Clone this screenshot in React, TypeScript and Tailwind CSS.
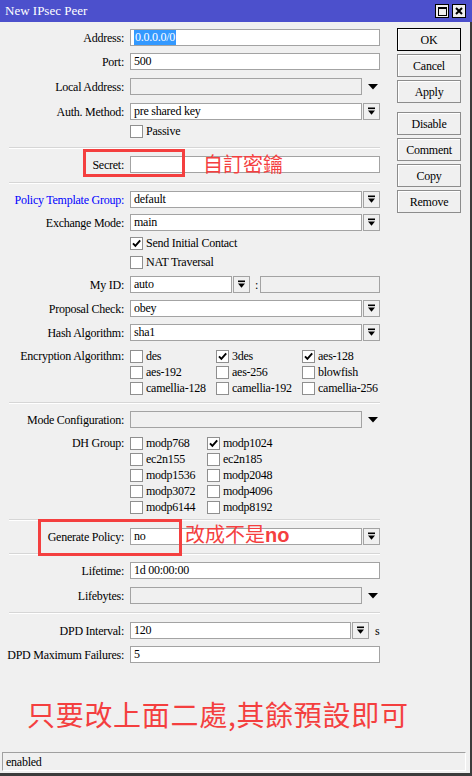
import React from 'react';

// IPsec peer editor window (WinBox style)

const DropBtn = () => (
  <div className="ml-px flex h-[17px] w-[17px] shrink-0 items-center justify-center border border-[#a3a3a3] bg-[#f0f0f0]">
    <svg width="9" height="9" viewBox="0 0 9 9">
      <rect x="1" y="0.5" width="7" height="1.6" fill="#000" />
      <path d="M1 3.4h7L4.5 7.8z" fill="#000" />
    </svg>
  </div>
);

const Arrow = () => (
  <svg className="ml-[6px] shrink-0" width="10" height="6" viewBox="0 0 10 6">
    <path d="M0 0h10L5 5.5z" fill="#000" />
  </svg>
);

function Label({ children, blue }: { children: React.ReactNode; blue?: boolean }) {
  return (
    <div className={`w-[124px] shrink-0 whitespace-nowrap text-right ${blue ? 'text-[#0000ff]' : 'text-black'}`}>
      {children}
    </div>
  );
}

function Box({ value, className, off }: { value?: React.ReactNode; className: string; off?: boolean }) {
  return (
    <div
      className={`flex h-[17px] items-center border border-[#a3a3a3] pl-[3px] leading-[15px] ${off ? 'bg-[#f0f0f0]' : 'bg-white'} ${className}`}
    >
      {value}
    </div>
  );
}

function Check({ on, label }: { on?: boolean; label: string }) {
  return (
    <div className="flex h-[16px] items-center whitespace-nowrap">
      <span className="flex h-[13px] w-[13px] shrink-0 items-center justify-center border border-[#8f8f8f] bg-white">
        {on && (
          <svg width="9" height="9" viewBox="0 0 9 9">
            <path d="M1 4.3l2.4 2.6L8.2 1.4" stroke="#000" strokeWidth="1.9" fill="none" />
          </svg>
        )}
      </span>
      <span className="ml-[3px]">{label}</span>
    </div>
  );
}

const Sep = ({ className }: { className: string }) => (
  <div className={`ml-[9px] h-[2px] w-[371px] border-t border-b border-t-[#d6d6d6] border-b-white ${className}`} />
);

function Btn({ children, primary, className = '' }: { children: string; primary?: boolean; className?: string }) {
  return (
    <div
      className={`flex h-[23px] w-[64px] items-center justify-center border bg-[#f0f0f0] shadow-[inset_1px_1px_0_#fff] ${primary ? 'border-black' : 'border-[#8c8c8c]'} ${className}`}
    >
      {children}
    </div>
  );
}

export default function App() {
  const encryption = [
    ['des', false], ['3des', true], ['aes-128', true],
    ['aes-192', false], ['aes-256', false], ['blowfish', false],
    ['camellia-128', false], ['camellia-192', false], ['camellia-256', false],
  ] as const;
  const dh = [
    ['modp768', false], ['modp1024', true],
    ['ec2n155', false], ['ec2n185', false],
    ['modp1536', false], ['modp2048', false],
    ['modp3072', false], ['modp4096', false],
    ['modp6144', false], ['modp8192', false],
  ] as const;

  return (
    <div className="flex h-[776px] w-[472px] flex-col overflow-hidden font-['Liberation_Serif',serif] text-[12px] tracking-[-0.25px] text-black">
      {/* title bar */}
      <div className="flex h-[22px] shrink-0 items-center bg-[#4c50cc] pl-[5px] pr-[6px]">
        <span className="text-[13px] tracking-normal text-white">New IPsec Peer</span>
        <div className="ml-auto flex gap-[3px]">
          <div className="flex h-[14px] w-[14px] items-center justify-center border border-black bg-[#eeeeee]">
            <div className="h-[9px] w-[9px] border border-t-2 border-black" />
          </div>
          <div className="flex h-[14px] w-[14px] items-center justify-center border border-black bg-[#eeeeee]">
            <svg width="8" height="8" viewBox="0 0 8 8">
              <path d="M1 1l6 6M7 1L1 7" stroke="#000" strokeWidth="2" />
            </svg>
          </div>
        </div>
      </div>

      <div className="flex flex-1 flex-col border-r-2 border-b-[3px] border-[#3c3c3c] bg-[#f0f0f0]">
        <div className="flex flex-1 overflow-hidden">
          {/* form */}
          <div className="relative flex w-[397px] shrink-0 flex-col">
            <div className="mt-[7px] flex h-[17px] items-center">
              <Label>Address:</Label>
              <Box
                className="ml-[6px] w-[250px]"
                value={<span className="bg-[#3399ff] px-px text-white">0.0.0.0/0</span>}
              />
            </div>
            <div className="mt-[7px] flex h-[17px] items-center">
              <Label>Port:</Label>
              <Box className="ml-[6px] w-[250px]" value="500" />
            </div>
            <div className="mt-[8px] flex h-[17px] items-center">
              <Label>Local Address:</Label>
              <Box className="ml-[6px] w-[232px]" off />
              <Arrow />
            </div>
            <div className="mt-[8px] flex h-[17px] items-center">
              <Label>Auth. Method:</Label>
              <Box className="ml-[6px] w-[232px]" value="pre shared key" />
              <DropBtn />
            </div>
            <div className="mt-[3px] ml-[130px]">
              <Check label="Passive" />
            </div>
            <Sep className="mt-[8px]" />

            <div className="relative mt-[7px] flex h-[17px] items-center">
              <Label>Secret:</Label>
              <Box className="ml-[6px] w-[250px]" />
              <div className="absolute left-[83px] top-[-7px] h-[28px] w-[102px] border-[3px] border-[#f43f3f]" />
              <span className="absolute left-[203px] top-[-6px] font-['Noto_Sans_CJK_TC',sans-serif] text-[20px] leading-[28px] tracking-normal text-[#f43f3f]">
                自訂密鑰
              </span>
            </div>
            <Sep className="mt-[9px]" />

            <div className="mt-[7px] flex h-[17px] items-center">
              <Label blue>Policy Template Group:</Label>
              <Box className="ml-[6px] w-[232px]" value="default" />
              <DropBtn />
            </div>
            <div className="mt-[6px] flex h-[17px] items-center">
              <Label>Exchange Mode:</Label>
              <Box className="ml-[6px] w-[232px]" value="main" />
              <DropBtn />
            </div>
            <div className="mt-[4px] ml-[130px]">
              <Check on label="Send Initial Contact" />
            </div>
            <div className="mt-[3px] ml-[130px]">
              <Check label="NAT Traversal" />
            </div>
            <div className="mt-[6px] flex h-[17px] items-center">
              <Label>My ID:</Label>
              <Box className="ml-[6px] w-[102px]" value="auto" />
              <DropBtn />
              <span className="ml-[5px] w-[5px]">:</span>
              <Box className="w-[120px]" off />
            </div>
            <div className="mt-[7px] flex h-[17px] items-center">
              <Label>Proposal Check:</Label>
              <Box className="ml-[6px] w-[232px]" value="obey" />
              <DropBtn />
            </div>
            <div className="mt-[7px] flex h-[17px] items-center">
              <Label>Hash Algorithm:</Label>
              <Box className="ml-[6px] w-[232px]" value="sha1" />
              <DropBtn />
            </div>
            <div className="mt-[7px] flex">
              <div className="flex h-[16px] items-center">
                <Label>Encryption Algorithm:</Label>
              </div>
              <div className="ml-[6px] grid grid-cols-[86px_86px_86px]">
                {encryption.map(([name, on]) => (
                  <Check key={name} on={on} label={name} />
                ))}
              </div>
            </div>
            <Sep className="mt-[6px]" />

            <div className="mt-[7px] flex h-[17px] items-center">
              <Label>Mode Configuration:</Label>
              <Box className="ml-[6px] w-[232px]" off />
              <Arrow />
            </div>
            <div className="mt-[7px] flex">
              <div className="flex h-[16px] items-center">
                <Label>DH Group:</Label>
              </div>
              <div className="ml-[6px] grid grid-cols-[77px_77px]">
                {dh.map(([name, on]) => (
                  <Check key={name} on={on} label={name} />
                ))}
              </div>
            </div>
            <Sep className="mt-[4px]" />

            <div className="relative mt-[7px] flex h-[17px] items-center">
              <Label>Generate Policy:</Label>
              <Box className="ml-[6px] w-[232px]" value="no" />
              <DropBtn />
              <div className="absolute left-[38px] top-[-9px] h-[37px] w-[144px] border-[3px] border-[#f43f3f]" />
              <span className="absolute left-[185px] top-[-8px] whitespace-nowrap font-['Noto_Sans_CJK_TC',sans-serif] text-[20px] leading-[28px] tracking-normal text-[#f43f3f]">
                改成不是<b className="font-['Liberation_Sans',sans-serif]">no</b>
              </span>
            </div>
            <Sep className="mt-[8px]" />

            <div className="mt-[7px] flex h-[17px] items-center">
              <Label>Lifetime:</Label>
              <Box className="ml-[6px] w-[250px]" value="1d 00:00:00" />
            </div>
            <div className="mt-[8px] flex h-[17px] items-center">
              <Label>Lifebytes:</Label>
              <Box className="ml-[6px] w-[232px]" off />
              <Arrow />
            </div>
            <Sep className="mt-[8px]" />

            <div className="mt-[8px] flex h-[17px] items-center">
              <Label>DPD Interval:</Label>
              <Box className="ml-[6px] w-[221px]" value="120" />
              <DropBtn />
              <span className="ml-[6px]">s</span>
            </div>
            <div className="mt-[7px] flex h-[17px] items-center">
              <Label>DPD Maximum Failures:</Label>
              <Box className="ml-[6px] w-[250px]" value="5" />
            </div>

            <div className="mt-[37px] whitespace-nowrap pl-[27px] font-['Noto_Sans_CJK_TC',sans-serif] text-[28px] leading-[28px] tracking-[0.7px] text-[#f43f3f]">
              只要改上面二處,其餘預設即可
            </div>
          </div>

          {/* action buttons */}
          <div className="flex flex-col pt-[6px]">
            <Btn primary>OK</Btn>
            <Btn className="mt-[3px]">Cancel</Btn>
            <Btn className="mt-[3px]">Apply</Btn>
            <Btn className="mt-[9px]">Disable</Btn>
            <Btn className="mt-[3px]">Comment</Btn>
            <Btn className="mt-[3px]">Copy</Btn>
            <Btn className="mt-[3px]">Remove</Btn>
          </div>
        </div>

        {/* status bar */}
        <div className="mb-[2px] ml-[2px] flex h-[19px] w-[464px] items-center border border-t-[#a0a0a0] border-l-[#a0a0a0] border-r-white border-b-white pl-[3px]">
          enabled
        </div>
      </div>
    </div>
  );
}
